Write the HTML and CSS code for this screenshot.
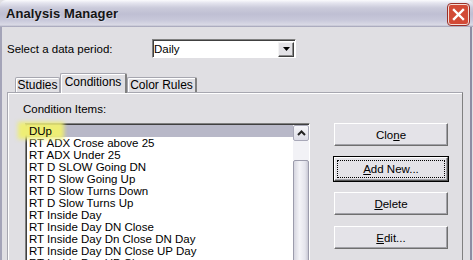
FILE: index.html
```html
<!DOCTYPE html>
<html>
<head>
    <title>Analysis Manager</title>
    <link rel="stylesheet" href="styles.css">
</head>
<body>
    <div class="window">
        <div class="titlebar">
            <span class="title">Analysis Manager</span>
            <div class="close-btn">
                <svg width="13" height="13" viewBox="0 0 13 13"><path d="M2 2 L11 11 M11 2 L2 11" stroke="#ffffff" stroke-width="2.4" stroke-linecap="square"/></svg>
            </div>
        </div>
        <div class="frame">
            <div class="period-row">
                <span class="period-label">Select a data period:</span>
                <div class="combo">
                    <span>Daily</span>
                    <span class="combo-btn">
                        <svg width="7" height="4" viewBox="0 0 7 4"><path d="M0 0 H7 L3.5 4 Z" fill="#000"/></svg>
                    </span>
                </div>
            </div>

            <div class="tabs">
                <div class="tab tab-studies">Studies</div>
                <div class="tab tab-active">Conditions</div>
                <div class="tab tab-color">Color Rules</div>
            </div>

            <div class="panel">
                <div class="panel-label">Condition Items:</div>
                <div class="panel-main">
                    <div class="listbox">
                        <ul class="items">
                            <li class="selected"><span class="marked">DUp</span></li>
                            <li>RT ADX Crose above 25</li>
                            <li>RT ADX Under 25</li>
                            <li>RT D SLOW Going DN</li>
                            <li>RT D Slow Going Up</li>
                            <li>RT D Slow Turns Down</li>
                            <li>RT D Slow Turns Up</li>
                            <li>RT Inside Day</li>
                            <li>RT Inside Day DN Close</li>
                            <li>RT Inside Day Dn Close DN Day</li>
                            <li>RT Inside Day DN Close UP Day</li>
                            <li>RT Inside Day UP Close</li>
                        </ul>
                        <div class="scrollbar">
                            <div class="scroll-up">
                                <svg width="9" height="6" viewBox="0 0 9 6"><path d="M1 5 L4.5 1.5 L8 5" fill="none" stroke="#222" stroke-width="2"/></svg>
                            </div>
                            <div class="scroll-track"></div>
                            <div class="scroll-thumb"></div>
                        </div>
                    </div>
                    <div class="buttons">
                        <button class="btn">Clo<u>n</u>e</button>
                        <button class="btn btn-default"><span class="focus"><u>A</u>dd New...</span></button>
                        <button class="btn"><u>D</u>elete</button>
                        <button class="btn"><u>E</u>dit...</button>
                    </div>
                </div>
            </div>
        </div>
    </div>
</body>
</html>
```

FILE: styles.css
```css
* { box-sizing: border-box; }
body { margin: 0; font-family: "Liberation Sans", Arial, sans-serif; font-size: 11.5px; color: #000; background: #e0dfe3; }

.window { width: 473px; height: 260px; overflow: hidden; background: #e0dfe3; }

.titlebar { height: 27px; display: flex; align-items: center; justify-content: space-between; padding: 0 4px 0 6px;
    border-radius: 6px 6px 0 0;
    background: linear-gradient(#fbfbfd 0, #e4e4ee 3px, #cacada 8px, #bfbfd3 14px, #c8c8da 20px, #dadae6 25px, #9d9db3 27px); }
.title { font-weight: bold; font-size: 13px; color: #151515; letter-spacing: 0.1px; text-shadow: 1px 1px 0 rgba(255,255,255,0.35); }
.close-btn { width: 21px; height: 21px; margin-top: 2px; border-radius: 3px; border: 1px solid #f4dcd6; display: flex; align-items: center; justify-content: center;
    background-color: #d24a36; outline: 1px solid #9a3028; }

.frame { height: 233px; border-left: 2px solid #a4a4b8; border-right: 2px solid #8d8da3; margin-right: 1px; padding: 12px 0 0 5px; }

.period-row { display: flex; align-items: center; height: 19px; }
.period-label { width: 145px; }
.combo { width: 144px; height: 19px; background: #fff; display: flex; align-items: center; padding-left: 1px;
    border: 1px solid; border-color: #808080 #fff #fff #808080; box-shadow: inset 1px 1px 0 #404040; }
.combo-btn { margin-left: auto; margin-right: 1px; width: 16px; height: 15px; margin-top: 1px; display: flex; align-items: center; justify-content: center;
    background: #e3e2e6; border: 1px solid; border-color: #f4f4f4 #404040 #404040 #f4f4f4; box-shadow: inset -1px -1px 0 #8c8c8c; }

.tabs { display: flex; align-items: flex-end; height: 19px; margin: 15px 0 0 8px; position: relative; z-index: 1; }
.tab { height: 15px; display: flex; align-items: center; justify-content: center; background: #e0dfe3; font-size: 12px;
    border: 1px solid #a7a7b0; border-bottom: none; border-radius: 2px 2px 0 0; box-shadow: inset 1px 1px 0 #fff; }
.tab-studies { width: 45px; }
.tab-color { width: 70px; border-right: 2px solid #808080; }
.tab-active { width: 67px; height: 20px; margin-bottom: -1px; padding-bottom: 3px; border-right: 2px solid #808080; }

.panel { width: 456px; height: 200px; border: 1px solid #a7a7b0; border-right-color: #808080; box-shadow: inset 1px 1px 0 #fff; padding: 9px 0 0 15px; }
.panel-label { line-height: 14px; }
.panel-main { display: flex; margin-top: 7px; }

.listbox { margin-left: 2px; width: 285px; height: 160px; display: flex; background: #fff;
    border: 1px solid; border-color: #808080 #fff #fff #808080; box-shadow: inset 1px 1px 0 #404040; padding: 1px 0 0 1px; }
.items { flex: 1; list-style: none; margin: 0; padding: 0; }
.items li { height: 12px; line-height: 12px; padding-left: 2px; white-space: nowrap; }
.items li.selected { background: #b8b8c8; }
.marked { position: relative; z-index: 0; }
.marked::before { content: ""; position: absolute; left: -11px; right: -12px; top: -3px; bottom: -2px; z-index: -1;
    background: #eeee74; filter: blur(2px); }

.scrollbar { width: 16px; display: flex; flex-direction: column; }
.scroll-up { height: 16px; display: flex; align-items: center; justify-content: center; border: 1px solid #a8a8b8; border-radius: 2px;
    background: linear-gradient(#f6f6fa, #dcdce6); }
.scroll-track { height: 19px; background: #f2f2f6; }
.scroll-thumb { flex: 1; border: 1px solid #9c9cac; border-radius: 2px;
    background: linear-gradient(90deg, #d6d6e0, #f4f4f8 40%, #e4e4ec 80%, #c8c8d4); }

.buttons { margin-left: 24px; width: 114px; display: flex; flex-direction: column; gap: 11px; }
.btn { height: 23px; padding: 0; font-family: "Liberation Sans", Arial, sans-serif; font-size: 11.5px; color: #000; background: #e4e3e8;
    border: 1px solid; border-color: #fff #6f6f6f #6f6f6f #fff; box-shadow: inset -1px -1px 0 #a2a2a8; }
.btn-default { height: 24px; outline: 1px solid #000; border-color: #fff #555 #555 #fff; display: flex; align-items: center; justify-content: center; padding: 2px; }
.btn-default .focus { flex: 1; height: 100%; display: flex; align-items: center; justify-content: center; border: 1px dotted #000; }
```
